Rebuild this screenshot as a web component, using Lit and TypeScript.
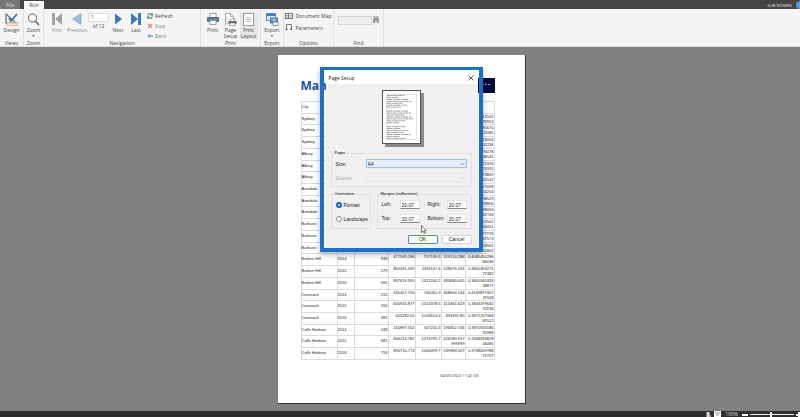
import { LitElement, html, css, svg } from "lit";
import { customElement } from "lit/decorators.js";

interface Row {
  city: string;
  year: string;
  cells: string[];
  ratio: [string, string];
}

const row = (city: string, year: string, cells: string, a: string, b: string): Row => ({
  city,
  year,
  cells: cells ? cells.split("|") : ["", "", "", ""],
  ratio: [a, b],
});

const ROWS: Row[] = [
  row("Sydney", "", "", "113552", "29953"),
  row("Sydney", "", "", "285670", "21085"),
  row("Sydney", "", "", "213054", "42236"),
  row("Albury", "", "", "376078", "46541"),
  row("Albury", "", "", "121376", "23335"),
  row("Albury", "", "", "273809", "55142"),
  row("Armidale", "", "", "197098", "54253"),
  row("Armidale", "", "", "298523", "28806"),
  row("Armidale", "", "", "088094", "32743"),
  row("Bathurst", "", "", "102502", "34451"),
  row("Bathurst", "", "", "177776", "37573"),
  row("Bathurst", "", "", "558901", "55802"),
  row("Broken Hill", "2014", "338|477595.286|797199.5|319214.286", "0.4085450286", "84036"),
  row("Broken Hill", "2015", "579|862431.169|1391107.6|528676.431", "0.3800393271", "77482"),
  row("Broken Hill", "2016", "565|837619.595|1321200.2|483680.605", "0.3660545318", "28877"),
  row("Cessnock", "2014", "215|431457.756|740061.9|308604.144", "0.4169877407", "29108"),
  row("Cessnock", "2015", "316|600916.877|1014378.5|413461.623", "0.3843379632", "91136"),
  row("Cessnock", "2016", "481|624282.55|1018614.4|394331.85", "0.3871257366", "87012"),
  row("Coffs Harbour", "2014", "248|310897.554|507250.3|196352.746", "0.3870924186", "55988"),
  row("Coffs Harbour", "2015", "681|846214.782|1273795.7|426580.917 999999", "0.3348933828", "44085"),
  row("Coffs Harbour", "2016", "716|890710.773|1430099.7|539389.027", "0.3748059788", "71707"),
];

const ico = {
  design: html`<svg width="14" height="13" viewBox="0 0 14 13">
    <path d="M1 1v9h10z" fill="none" stroke="#777" stroke-width="1.3" />
    <path d="M4 5l2 3 6-7" fill="none" stroke="#3b78b5" stroke-width="1.8" />
    <rect x="2" y="9.5" width="11" height="3" fill="#fbe5d3" stroke="#e3a070" stroke-width=".7" />
    <path d="M5 10v1M7.500 10v1M10 10v1" stroke="#d08050" stroke-width=".6" />
  </svg>`,
  zoom: html`<svg width="13" height="13" viewBox="0 0 13 13">
    <circle cx="5.500" cy="5" r="4" fill="#fff" stroke="#6b6b6b" stroke-width="1.1" />
    <path d="M8.300 8l3.700 4" stroke="#6b6b6b" stroke-width="1.7" />
  </svg>`,
  first: html`<svg width="12" height="12" viewBox="0 0 12 12" fill="#a3a3a3"><path d="M1 0h3v12H1zM11 0v12L4 6z" /></svg>`,
  prev: html`<svg width="12" height="12" viewBox="0 0 12 12"><path d="M10 .5v11L1.500 6z" fill="#9db8e2" stroke="#7fa2d8" stroke-width=".6" /></svg>`,
  next: html`<svg width="12" height="12" viewBox="0 0 12 12"><path d="M3 .5v11L10 6z" fill="#3f78b8" /></svg>`,
  last: html`<svg width="12" height="12" viewBox="0 0 12 12" fill="#3f78b8"><path d="M1 0v12l7-6zM8 0h3v12H8z" /></svg>`,
  refresh: html`<svg width="6" height="6" viewBox="0 0 6 6" fill="none" stroke="#4f9a86" stroke-width="1.1">
    <path d="M.700 2.600A2.300 2.300 0 0 1 5 1.800M5.300 3.400A2.300 2.300 0 0 1 1 4.200M5.400.300v1.800H3.600M.600 5.700V3.900h1.800" />
  </svg>`,
  stop: html`<svg width="6" height="6" viewBox="0 0 6 6"><path d="M1 1l4 4M5 1L1 5" stroke="#d98a72" stroke-width="1.4" /></svg>`,
  back: html`<svg width="6" height="6" viewBox="0 0 6 6"><path d="M0 3l3-2.500V2h3v2H3v1.500z" fill="#8fb0e0" /></svg>`,
  print: html`<svg width="12" height="12" viewBox="0 0 12 12">
    <rect x="3" y=".5" width="6" height="4" fill="#fff" stroke="#888" stroke-width=".8" />
    <rect y="4" width="12" height="5" rx="1" fill="#646c76" />
    <rect x="1" y="6" width="10" height="1" fill="#5f9bd3" />
    <rect x="3" y="7.500" width="6" height="4" fill="#fff" stroke="#888" stroke-width=".8" />
  </svg>`,
  setup: html`<svg width="13" height="13" viewBox="0 0 13 13">
    <path d="M1.500 12.500V.5h5l3 3v3" fill="#fff" stroke="#999" stroke-width=".8" />
    <path d="M6.500.500v3h3" fill="none" stroke="#999" stroke-width=".8" />
    <path d="M3 11V3M3 11h3" stroke="#aaa" stroke-dasharray="1 1" />
    <rect x="6" y="6" width="5" height="2.500" fill="#fff" stroke="#777" stroke-width=".6" />
    <rect x="4.500" y="8" width="8" height="3" fill="#646c76" />
    <rect x="6" y="10" width="5" height="2.500" fill="#fff" stroke="#777" stroke-width=".6" />
  </svg>`,
  layout: html`<svg width="11" height="13" viewBox="0 0 11 13">
    <rect x=".5" y=".5" width="10" height="12" fill="#fff" stroke="#999" />
    <path d="M3 4.500h5M3 6.500h5M3 8.500h5" stroke="#aaa" stroke-width=".8" />
  </svg>`,
  export: html`<svg width="13" height="13" viewBox="0 0 13 13">
    <rect x=".5" y=".5" width="9" height="7" fill="#dce8f5" stroke="#5d88ba" />
    <path d="M1 2h8" stroke="#4878b0" stroke-width="2" />
    <rect x="4" y="4.500" width="8" height="6" fill="#4a7cb8" />
    <path d="M5 7h6M8 5v5" stroke="#dce8f5" stroke-width=".8" />
    <path d="M7 9h5v3.500H7z" fill="#fff" stroke="#5d7590" stroke-width=".8" />
  </svg>`,
  map: html`<svg width="8" height="6" viewBox="0 0 8 6">
    <rect x=".5" y=".5" width="7" height="5" fill="#fff" stroke="#777" />
    <path d="M3.500 0v6" stroke="#777" /><path d="M1 2.500h2M1 4h2M4.500 2.500h2.500M4.500 4h2.500" stroke="#888" stroke-width=".7" />
  </svg>`,
  params: html`<svg width="8" height="7" viewBox="0 0 8 7">
    <path d="M1.500 6V.5h5V6" fill="#fff" stroke="#777" /><path d="M0 5.500h3M5 4l2 2M7 4L5 6" stroke="#666" stroke-width=".8" />
  </svg>`,
  find: html`<svg width="6" height="7" viewBox="0 0 6 7" fill="#999">
    <path d="M1 0h1.500v2h1V0H5l1 4v3H3.600V4.500H2.400V7H0V4z" />
  </svg>`,
  chevron: html`<svg class="chev" width="5" height="4" viewBox="0 0 5 4"><path d="M.5 1l2 2 2-2" fill="none" stroke="currentColor" stroke-width=".7" /></svg>`,
};

const LINES = [18, 12, 22, 25, 16, 20, 14, 0, 21, 24, 17, 25, 26, 18, 12, 0, 19, 14, 22, 17, 24, 13, 18];

@customElement("app-root")
export class AppRoot extends LitElement {
  static styles = css`
    :host {
      display: flex;
      flex-direction: column;
      min-height: 100vh;
      background: #808080;
      font: 5px/6px "Open Sans", "Noto Sans", sans-serif;
      color: #444;
      overflow: hidden;
    }
    * { box-sizing: border-box; }
    svg { display: block; flex: none; }
    button, input, select {
      font: inherit;
      color: inherit;
      border: 0;
      margin: 0;
      padding: 0;
      background: none;
      border-radius: 0;
      appearance: none;
      min-width: 0;
    }
    .topbar {
      display: flex;
      align-items: flex-end;
      height: 9px;
      background: #444;
      color: #ddd;
    }
    .tab { height: 8px; width: 20px; text-align: center; }
    .file { width: 20px; background: #777; margin-right: 4px; height: 9px; }
    .run { background: #f6f6f6; color: #444; }
    .user { margin-left: auto; padding-right: 4px; line-height: 8px; }
    .help { width: 8px; height: 8px; margin-right: -4px; border-radius: 50%; background: #5b8fd0; color: #fff; line-height: 8px; }
    .ribbon {
      display: flex;
      height: 38px;
      background: #f4f4f4;
      border-bottom: 1px solid #ddd;
    }
    .group {
      display: flex;
      flex-direction: column;
      border-right: 1px solid #e0e0e0;
      padding-top: 3px;
      text-align: center;
    }
    .tools { display: flex; flex: 1; justify-content: center; }
    .caption { height: 7px; line-height: 8px; }
    .tool {
      display: flex;
      flex-direction: column;
      align-items: center;
      width: 20px;
      line-height: 6px;
    }
    .narrow, .print .tool { width: 18px; }
    .pic { display: flex; align-items: center; justify-content: center; height: 14px; margin-bottom: 1px; }
    .on { background: #e6e6e6; }
    .off { color: #8a8a8a; }
    .caret { width: 3px; height: 2px; margin-top: 2px; background: #777; clip-path: polygon(0 0, 100% 0, 50% 100%); }
    .w24 { width: 24px; }
    .w20 { width: 20px; }
    .nav { width: 157px; }
    .nav .tools { justify-content: flex-start; padding-left: 3px; }
    .print { width: 60px; }
    .w23 { width: 23px; }
    .options { width: 50px; }
    .find { width: 50px; }
    .pager { width: 21px; margin: 1px 0 0 1px; line-height: 9px; }
    .pager input { width: 21px; height: 9px; padding: 0 2px; background: #fff; border: 1px solid #ddd; display: block; }
    .stack { display: flex; flex-direction: column; gap: 3px; padding-left: 2px; }
    .stack button { display: flex; align-items: center; gap: 2px; height: 7px; white-space: nowrap; }
    .options .stack { gap: 5px; padding: 0; }
    .find .tools { align-items: flex-start; padding-top: 4px; gap: 1px; }
    .find input { width: 34px; height: 9px; border: 1px solid #d4d4d4; background: #efefef; }

    .work { flex: 1; padding: 8px 0 7px 3px; }
    .page {
      position: relative;
      width: 248px;
      min-height: 349px;
      margin: 0 auto;
      padding: 23px 30px 0 23px;
      background: #fff;
      border-right: 1px solid #333;
      border-bottom: 1px solid #333;
      color: #222;
    }
    .head { display: flex; justify-content: space-between; height: 15px; }
    h1 { margin: 0; font-size: 12px; line-height: 15px; color: #1f4f9f; }
    .logo { width: 50px; background: #050b3c; display: flex; align-items: center; justify-content: flex-end; padding: 0 4px 2px 0; }
    table {
      width: 100%;
      height: 259px;
      margin-top: 8px;
      border-collapse: collapse;
      table-layout: fixed;
      font: 4px/5px "Liberation Sans", sans-serif;
    }
    th, td {
      border: 1px solid #dcdcdc;
      padding: 0;
      text-align: right;
      vertical-align: top;
      font-weight: normal;
    }
    .c0 { width: 36px; }
    .c1 { width: 17px; }
    .c2 { width: 34px; }
    .c3 { width: 27px; }
    .c4 { width: 26px; }
    .c5 { width: 24px; }
    .l { text-align: left; padding-top: 2px; white-space: nowrap; }
    .n { padding-top: 2px; }
    .stamp { margin-top: 13px; padding-right: 16px; text-align: right; font: 4px/6px "Noto Sans", sans-serif; color: #444; }

    .frame {
      position: absolute;
      left: 42px;
      top: 12px;
      width: 163px;
      border: 4px solid #1b6fc8;
      border-top-width: 3px;
      padding: 0 1px 0 2px;
      box-shadow: 0 3px 6px #0004;
    }
    .dialog {
      display: flex;
      flex-direction: column;
      background: #f0f0f0;
      border-radius: 2px;
      font: 5px/6px "Liberation Sans", sans-serif;
      color: #222;
    }
    .title {
      display: flex;
      justify-content: space-between;
      align-items: center;
      height: 14px;
      padding: 2px 4px 0 3px;
      background: #fff;
      font: 5px/8px "Open Sans", sans-serif;
    }
    .body { display: flex; flex-direction: column; padding: 6px 6px 4px 5px; }
    .sheet { align-self: center; background: #fff; border: 1px solid #555; box-shadow: 3px 3px 0 #8c8c8c; }
    fieldset { margin: 0; min-width: 0; border: 1px solid #e0e0e0; padding: 3px 4px 0; }
    legend { padding: 0 1px; margin-left: -2px; font-size: 4px; line-height: 6px; white-space: nowrap; color: #000; }
    .paper { margin-top: 6px; height: 37px; }
    .field { display: flex; align-items: center; height: 9px; }
    .field label { width: 30px; }
    .pick { position: relative; flex: 1; display: flex; }
    .pick select { flex: 1; height: 9px; padding: 0 1px; border: 1px solid #9cc2e8; background: #e5effb; }
    .dis { color: #aaa; margin-top: 5px; }
    .dis select { border-color: #e6e6e6; background: #f0f0f0; }
    .chev { position: absolute; right: 2px; top: 3px; color: #666; }
    .dis .chev { color: #ccc; }
    .pair { display: flex; gap: 6px; margin-top: 4px; }
    .pair fieldset { height: 38px; }
    .orient { width: 40px; }
    .orient label { display: flex; align-items: center; gap: 2px; height: 9px; }
    .orient label + label { margin-top: 5px; }
    .orient input { flex: none; width: 6px; height: 6px; border: 1px solid #888; border-radius: 50%; background: #fff; }
    .orient input:checked { border: 2px solid #1264b8; }
    .margins { flex: 1; }
    .grid { display: grid; grid-template-columns: 18px 20px 1fr 20px; row-gap: 5px; }
    .grid label { line-height: 9px; }
    .grid label:nth-child(4n + 3) { padding-left: 8px; }
    .grid input { width: 20px; height: 9px; padding: 0 1px; background: #fff; border: 1px solid #e4e4e4; border-bottom-color: #888; }
    .actions { display: flex; justify-content: flex-end; gap: 4px; margin-top: 6px; }
    .actions button { width: 30px; height: 9px; background: #fdfdfd; border: 1px solid #d4d4d4; border-radius: 1px; line-height: 7px; }
    .actions .ok { border-color: #4a90d0; }
    .cursor { position: absolute; left: 97px; top: 155px; }

    .status {
      display: flex;
      align-items: center;
      justify-content: flex-end;
      height: 7px;
      background: #2e2e2e;
      color: #ddd;
      overflow: hidden;
    }
    .status button { display: block; }
    .pct { margin: 0 4px; line-height: 7px; }
    .view { background: #fff; margin-left: 3px; padding: 1px; }
    .status input { width: 44px; height: 7px; margin: 0 2px; background: linear-gradient(#eee, #eee) center / 100% 1px no-repeat; }
    .status input::-webkit-slider-thumb { appearance: none; width: 2px; height: 5px; background: #eee; }
  `;

  private tool(pic: unknown, lines: string[], cls = "", caret = false) {
    return html`<button class="tool ${cls}">
      <span class="pic">${pic}</span>
      ${lines.map((t) => html`<span>${t}</span>`)}
      ${caret ? html`<span class="caret"></span>` : ""}
    </button>`;
  }

  private margin(id: string, label: string) {
    return html`<label for=${id}>${label}</label><input id=${id} value="20.07" />`;
  }

  private dialog() {
    return html`<div class="frame">
      <div class="dialog" role="dialog" aria-label="Page Setup">
        <div class="title">
          <span>Page Setup</span>
          <button aria-label="Close">
            <svg width="6" height="6" viewBox="0 0 6 6"><path d="M.5.5l5 5M5.500.500l-5 5" stroke="#333" stroke-width=".8" /></svg>
          </button>
        </div>
        <div class="body">
          <svg class="sheet" width="39" height="54" viewBox="0 0 37 52">
            <rect x="3.500" y="3.500" width="30" height="45" fill="none" stroke="#aaa" stroke-width=".6" stroke-dasharray="1.500 1" />
            ${LINES.map(
              (w, i) => svg`<path d="M4 ${4.5 + i * 1.95}h${w}" stroke="#888" stroke-width=".8" stroke-dasharray="${3 + (i % 3)} .6 2 .5" />`
            )}
          </svg>
          <fieldset class="paper">
            <legend>Paper</legend>
            <div class="field">
              <label for="size">Size:</label>
              <span class="pick"><select id="size"><option>A4</option></select>${ico.chevron}</span>
            </div>
            <div class="field dis">
              <label for="source">Source:</label>
              <span class="pick"><select id="source" disabled><option></option></select>${ico.chevron}</span>
            </div>
          </fieldset>
          <div class="pair">
            <fieldset class="orient">
              <legend>Orientation</legend>
              <label><input type="radio" name="o" checked />Portrait</label>
              <label><input type="radio" name="o" />Landscape</label>
            </fieldset>
            <fieldset class="margins">
              <legend>Margins (millimetres)</legend>
              <div class="grid">
                ${this.margin("ml", "Left:")}${this.margin("mr", "Right:")}
                ${this.margin("mt", "Top:")}${this.margin("mb", "Bottom:")}
              </div>
            </fieldset>
          </div>
          <div class="actions"><button class="ok">OK</button><button>Cancel</button></div>
        </div>
      </div>
      <svg class="cursor" width="6" height="9" viewBox="0 0 6 9">
        <path d="M.5.5v7l1.600-1.500 1.200 2.500 1.100-.500-1.200-2.400h2.200z" fill="#fff" stroke="#444" stroke-width=".7" />
      </svg>
    </div>`;
  }

  render() {
    return html`
      <div class="topbar">
        <button class="tab file">File</button>
        <button class="tab run">Run</button>
        <span class="user">sue bowes</span>
        <button class="help" aria-label="Help">?</button>
      </div>
      <div class="ribbon">
        <div class="group w24">
          <div class="tools">${this.tool(ico.design, ["Design"])}</div>
          <div class="caption">Views</div>
        </div>
        <div class="group w20">
          <div class="tools">${this.tool(ico.zoom, ["Zoom"], "", true)}</div>
          <div class="caption">Zoom</div>
        </div>
        <div class="group nav">
          <div class="tools">
            ${this.tool(ico.first, ["First"], "off")} ${this.tool(ico.prev, ["Previous"], "off")}
            <div class="pager"><input aria-label="Page" value="1" />of 12</div>
            ${this.tool(ico.next, ["Next"], "narrow")}
            ${this.tool(ico.last, ["Last"], "narrow")}
            <div class="stack">
              <button>${ico.refresh}Refresh</button>
              <button class="off">${ico.stop}Stop</button>
              <button class="off">${ico.back}Back</button>
            </div>
          </div>
          <div class="caption">Navigation</div>
        </div>
        <div class="group print">
          <div class="tools">
            ${this.tool(ico.print, ["Print"])} ${this.tool(ico.setup, ["Page", "Setup"])}
            ${this.tool(ico.layout, ["Print", "Layout"], "on")}
          </div>
          <div class="caption">Print</div>
        </div>
        <div class="group w23">
          <div class="tools">${this.tool(ico.export, ["Export"], "", true)}</div>
          <div class="caption">Export</div>
        </div>
        <div class="group options">
          <div class="tools">
            <div class="stack">
              <button>${ico.map}Document Map</button>
              <button>${ico.params}Parameters</button>
            </div>
          </div>
          <div class="caption">Options</div>
        </div>
        <div class="group find">
          <div class="tools"><input aria-label="Find" /><button aria-label="Find next">${ico.find}</button></div>
          <div class="caption">Find</div>
        </div>
      </div>
      <main class="work">
        <div class="page">
          <div class="head">
            <h1>Man</h1>
            <div class="logo"><svg width="9" height="1" viewBox="0 0 9 1"><path d="M0 .5h9" stroke="#8fa0c8" stroke-dasharray="2 1" /></svg></div>
          </div>
          <table>
            <colgroup>
              <col class="c0" /><col class="c1" /><col class="c2" /><col class="c3" /><col class="c4" /><col class="c5" /><col />
            </colgroup>
            <tr>
              <th class="l">City</th><th></th><th></th><th></th><th></th><th></th><th>&nbsp;<br />&nbsp;</th>
            </tr>
            ${ROWS.map(
              (r) => html`<tr>
                <td class="l">${r.city}</td>
                <td class="l">${r.year}</td>
                ${r.cells.map((c, i) => html`<td class=${i ? "" : "n"}>${c}</td>`)}
                <td>${r.ratio[0]}<br />${r.ratio[1]}</td>
              </tr>`
            )}
          </table>
          <div class="stamp">04/05/2022 11:41:03</div>
          ${this.dialog()}
        </div>
      </main>
      <div class="status">
        <svg width="5" height="7" viewBox="0 0 5 7"><path d="M.5 1h3v5h-3z" fill="#ddd" /><path d="M3 4h2v2H3z" fill="#c98" /></svg>
        <button class="view" aria-label="Page view">
          <svg width="5" height="5" viewBox="0 0 5 5"><path d="M0 1h5M1 3h3" stroke="#777" stroke-width=".8" /></svg>
        </button>
        <span class="pct">100%</span>
        <button aria-label="Zoom out"><svg width="6" height="6" viewBox="0 0 6 6"><path d="M0 3h6" stroke="#fff" stroke-width="2" /></svg></button>
        <input type="range" aria-label="Zoom" value="47" />
        <button aria-label="Zoom in"><svg width="4" height="6" viewBox="0 0 4 6"><path d="M0 3h4M3 0v6" stroke="#fff" stroke-width="2" /></svg></button>
      </div>
    `;
  }
}
